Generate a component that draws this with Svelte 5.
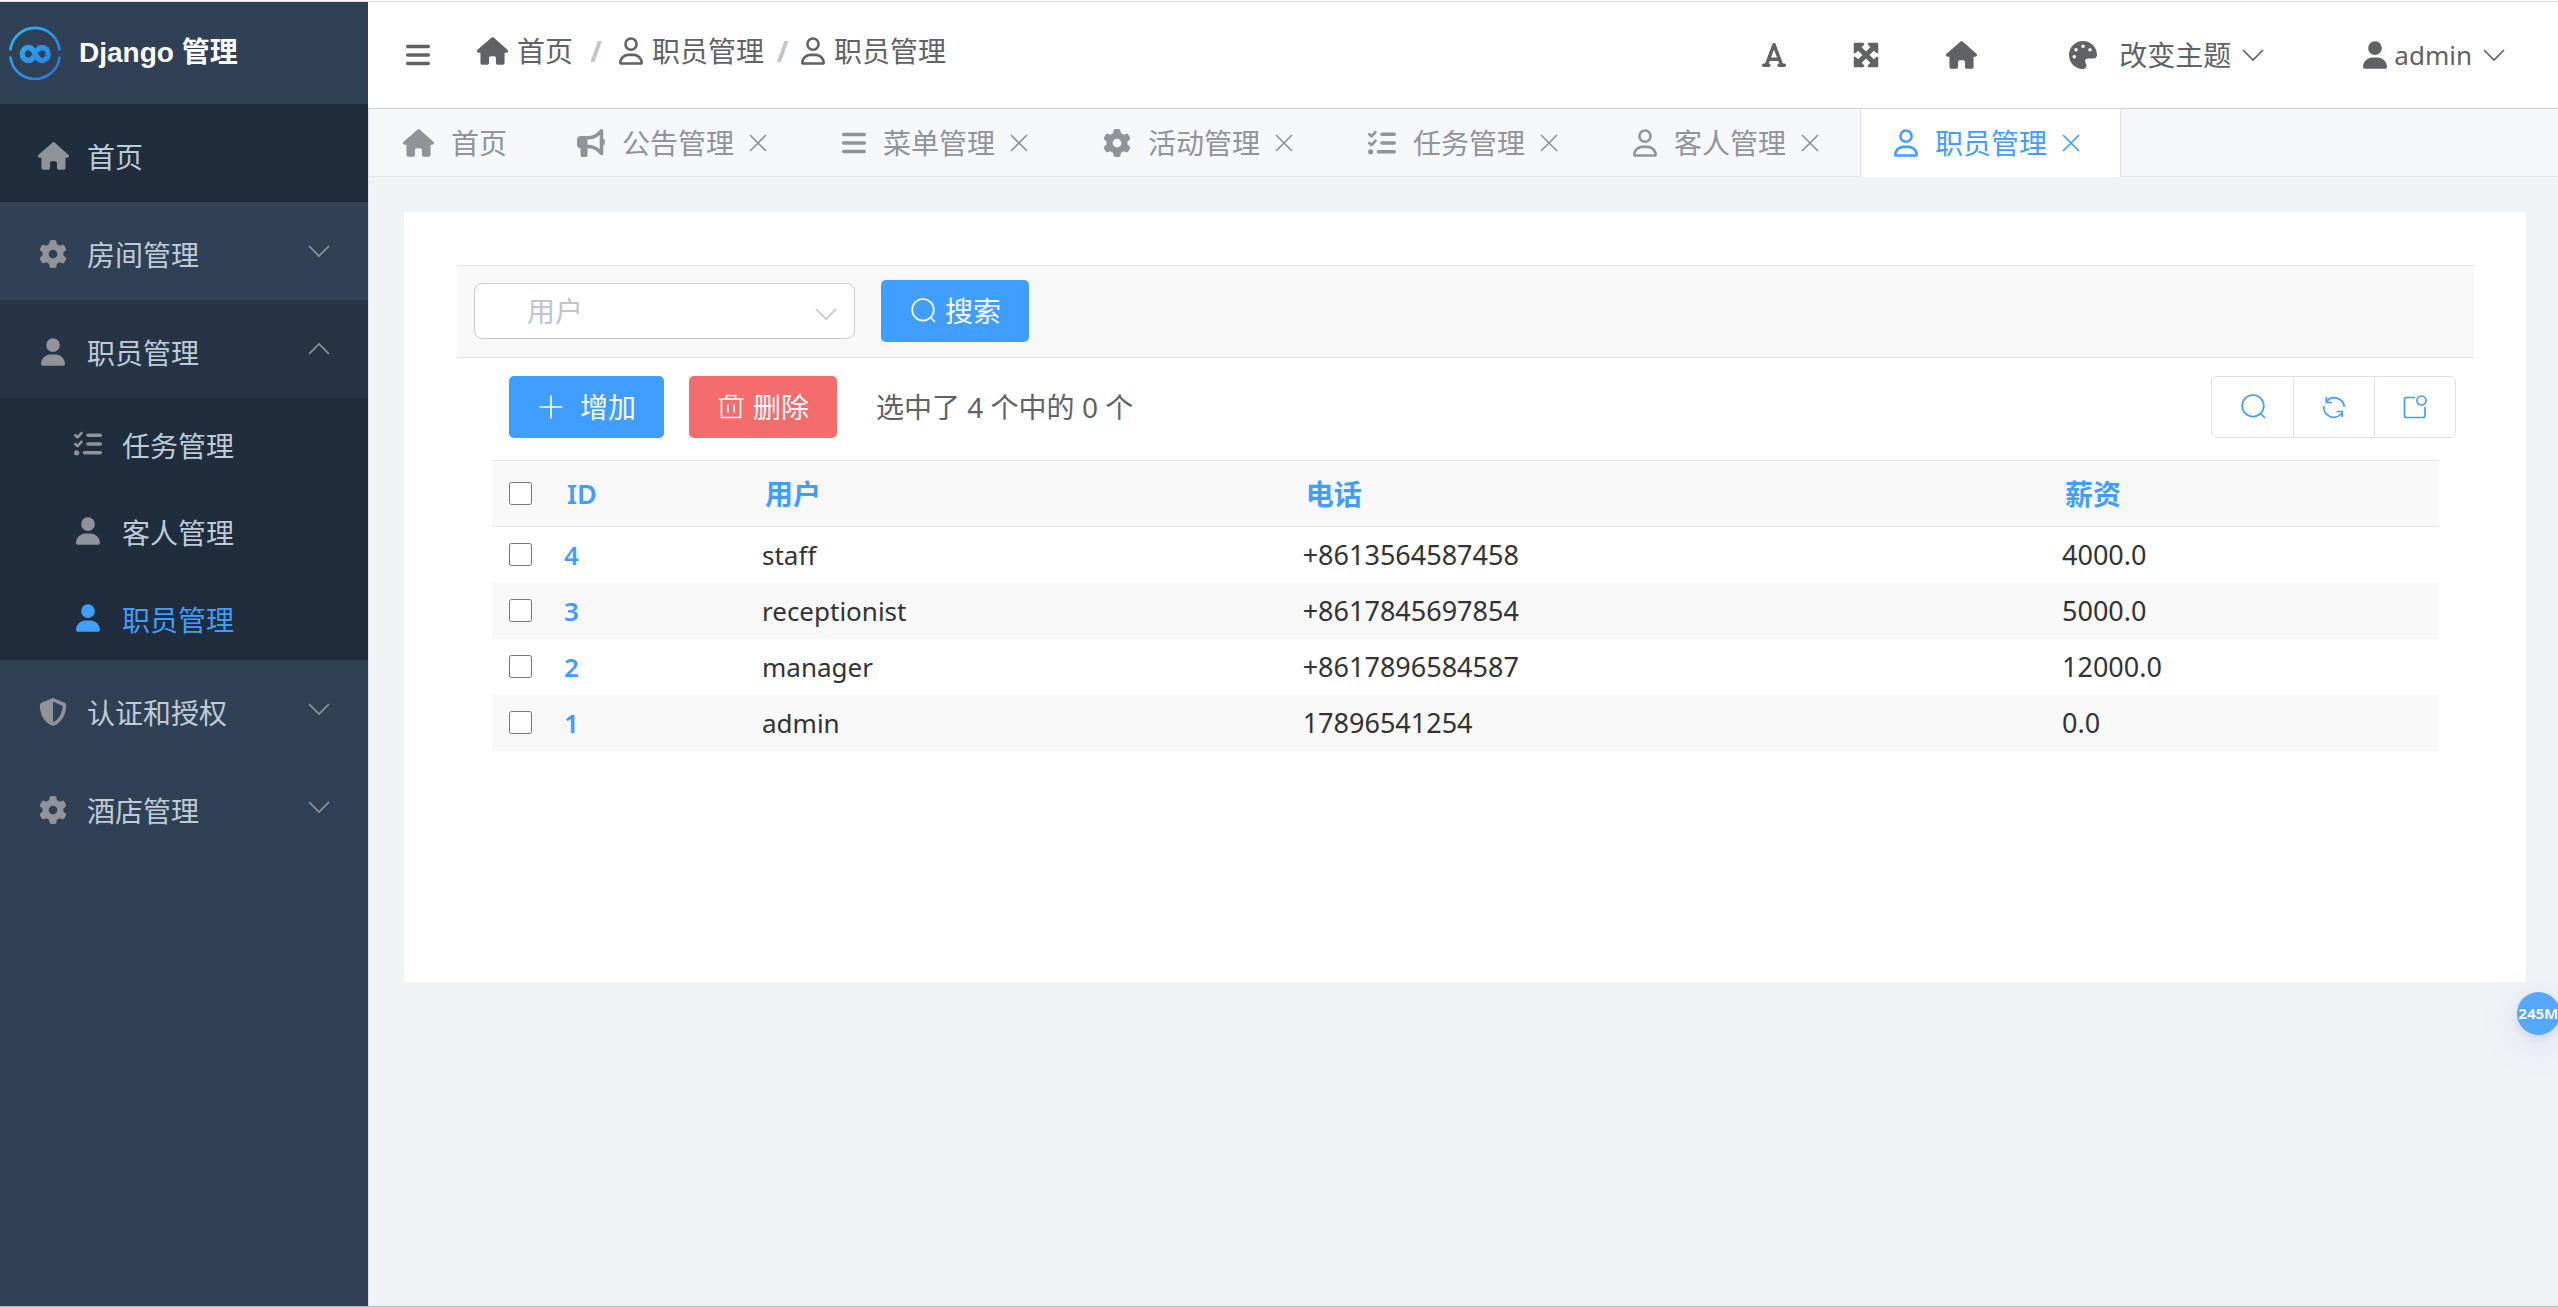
<script>
  const icons = {
    house: {
      w: 576,
      d: "M575.8 255.5c0 18-15 32.1-32 32.1h-32l.7 160.2c0 2.7-.2 5.4-.5 8.1V472c0 22.1-17.9 40-40 40H456c-1.1 0-2.2 0-3.3-.1c-1.4 .1-2.8 .1-4.2 .1H416 392c-22.1 0-40-17.9-40-40V448 384c0-17.7-14.3-32-32-32H256c-17.7 0-32 14.3-32 32v64 24c0 22.1-17.9 40-40 40H160 128.1c-1.5 0-3-.1-4.5-.2c-1.2 .1-2.4 .2-3.6 .2H104c-22.1 0-40-17.9-40-40V360c0-.9 0-1.9 .1-2.8V287.6H32c-18 0-32-14-32-32.1c0-9 3-17 10-24L266.4 8c7-7 15-8 22-8s15 2 21 7L564.8 231.5c8 7 12 15 11 24z",
    },
    bars: {
      w: 448,
      d: "M0 96C0 78.3 14.3 64 32 64H416c17.7 0 32 14.3 32 32s-14.3 32-32 32H32C14.3 128 0 113.7 0 96zM0 256c0-17.7 14.3-32 32-32H416c17.7 0 32 14.3 32 32s-14.3 32-32 32H32c-17.7 0-32-14.3-32-32zM448 416c0 17.7-14.3 32-32 32H32c-17.7 0-32-14.3-32-32s14.3-32 32-32H416c17.7 0 32 14.3 32 32z",
    },
    user: {
      w: 448,
      d: "M224 256A128 128 0 1 0 224 0a128 128 0 1 0 0 256zm-45.7 48C79.8 304 0 383.8 0 482.3C0 498.7 13.3 512 29.7 512H418.3c16.4 0 29.7-13.3 29.7-29.7C448 383.8 368.2 304 269.7 304H178.3z",
    },
    userLine: {
      w: 448,
      d: "M304 128a80 80 0 1 0 -160 0 80 80 0 1 0 160 0zM96 128a128 128 0 1 1 256 0A128 128 0 1 1 96 128zM49.3 464H398.7c-8.9-63.3-63.3-112-129-112H178.3c-65.7 0-120.1 48.7-129 112zM0 482.3C0 383.8 79.8 304 178.3 304h91.4C368.2 304 448 383.8 448 482.3c0 16.4-13.3 29.7-29.7 29.7H29.7C13.3 512 0 498.7 0 482.3z",
    },
    gear: {
      w: 512,
      d: "M495.9 166.6c3.2 8.7 .5 18.4-6.4 24.6l-43.3 39.4c1.1 8.3 1.7 16.8 1.7 25.4s-.6 17.1-1.7 25.4l43.3 39.4c6.9 6.2 9.6 15.9 6.4 24.6c-4.4 11.9-9.7 23.3-15.8 34.3l-4.7 8.1c-6.6 11-14 21.4-22.1 31.2c-5.9 7.2-15.7 9.6-24.5 6.8l-55.7-17.7c-13.4 10.3-28.2 18.9-44 25.4l-12.5 57.1c-2 9.1-9 16.3-18.2 17.8c-13.8 2.3-28 3.5-42.5 3.5s-28.7-1.2-42.5-3.5c-9.2-1.5-16.2-8.7-18.2-17.8l-12.5-57.1c-15.8-6.5-30.6-15.1-44-25.4L83.1 425.9c-8.8 2.8-18.6 .3-24.5-6.8c-8.1-9.8-15.5-20.2-22.1-31.2l-4.7-8.1c-6.1-11-11.4-22.4-15.8-34.3c-3.2-8.7-.5-18.4 6.4-24.6l43.3-39.4C64.6 273.1 64 264.6 64 256s.6-17.1 1.7-25.4L22.4 191.2c-6.9-6.2-9.6-15.9-6.4-24.6c4.4-11.9 9.7-23.3 15.8-34.3l4.7-8.1c6.6-11 14-21.4 22.1-31.2c5.9-7.2 15.7-9.6 24.5-6.8l55.7 17.7c13.4-10.3 28.2-18.9 44-25.4l12.5-57.1c2-9.1 9-16.3 18.2-17.8C227.3 1.2 241.5 0 256 0s28.7 1.2 42.5 3.5c9.2 1.5 16.2 8.7 18.2 17.8l12.5 57.1c15.8 6.5 30.6 15.1 44 25.4l55.7-17.7c8.8-2.8 18.6-.3 24.5 6.8c8.1 9.8 15.5 20.2 22.1 31.2l4.7 8.1c6.1 11 11.4 22.4 15.8 34.3zM256 336a80 80 0 1 0 0-160 80 80 0 1 0 0 160z",
    },
    tasks: {
      w: 512,
      d: "M152.1 38.2c9.9 8.9 10.7 24 1.8 33.9l-72 80c-4.4 4.9-10.6 7.8-17.2 7.9s-12.9-2.4-17.6-7L7 113C-2.3 103.6-2.3 88.4 7 79s24.6-9.4 33.9 0l22.1 22.1 55.1-61.2c8.9-9.9 24-10.7 33.9-1.8zm0 160c9.9 8.9 10.7 24 1.8 33.9l-72 80c-4.4 4.9-10.6 7.8-17.2 7.9s-12.9-2.4-17.6-7L7 273c-9.4-9.4-9.4-24.6 0-33.9s24.6-9.4 33.9 0l22.1 22.1 55.1-61.2c8.9-9.9 24-10.7 33.9-1.8zM224 96c0-17.7 14.3-32 32-32H480c17.7 0 32 14.3 32 32s-14.3 32-32 32H256c-17.7 0-32-14.3-32-32zm0 160c0-17.7 14.3-32 32-32H480c17.7 0 32 14.3 32 32s-14.3 32-32 32H256c-17.7 0-32-14.3-32-32zM160 416c0-17.7 14.3-32 32-32H480c17.7 0 32 14.3 32 32s-14.3 32-32 32H192c-17.7 0-32-14.3-32-32zM48 368a48 48 0 1 1 0 96 48 48 0 1 1 0-96z",
    },
    shield: {
      w: 512,
      d: "M256 0c4.6 0 9.2 1 13.4 2.9L457.7 82.8c22 9.3 38.4 31 38.3 57.2c-.5 99.2-41.3 280.7-213.6 363.2c-16.7 8-36.1 8-52.8 0C57.3 420.7 16.5 239.2 16 140c-.1-26.2 16.3-47.9 38.3-57.2L242.7 2.9C246.8 1 251.4 0 256 0zm0 66.8V444.8C394 378 431.1 230.1 432 141.4L256 66.8l0 0z",
    },
    bullhorn: {
      w: 512,
      d: "M480 32c0-12.9-7.8-24.6-19.8-29.6s-25.7-2.2-34.9 6.9L381.7 53c-48 48-113.1 75-181 75H192 160 64c-35.3 0-64 28.7-64 64v96c0 35.3 28.7 64 64 64l0 128c0 17.7 14.3 32 32 32h64c17.7 0 32-14.3 32-32V352l8.7 0c67.9 0 133 27 181 75l43.6 43.6c9.2 9.2 22.9 11.9 34.9 6.9s19.8-16.6 19.8-29.6V300.4c18.6-8.8 32-32.5 32-60.4s-13.4-51.6-32-60.4V32zm-64 76.7V240 371.3C357.2 317.8 280.5 288 200.7 288H192V192h8.7c79.8 0 156.5-29.8 215.3-83.3z",
    },
    font: {
      w: 448,
      d: "M254 52.8C249.3 40.3 237.3 32 224 32s-25.3 8.3-30 20.8L57.8 416H32c-17.7 0-32 14.3-32 32s14.3 32 32 32h96c17.7 0 32-14.3 32-32s-14.3-32-32-32h-1.8l18-48H303.8l18 48H320c-17.7 0-32 14.3-32 32s14.3 32 32 32h96c17.7 0 32-14.3 32-32s-14.3-32-32-32H390.2L254 52.8zM279.8 304H168.2L224 155.1 279.8 304z",
    },
    maximize: {
      w: 512,
      d: "M200 32H56C42.7 32 32 42.7 32 56V200c0 9.7 5.8 18.5 14.8 22.2s19.3 1.7 26.2-5.2l40-40 79 79-79 79L73 295c-6.9-6.9-17.2-8.9-26.2-5.2S32 302.3 32 312V456c0 13.3 10.7 24 24 24H200c9.7 0 18.5-5.8 22.2-14.8s1.7-19.3-5.2-26.2l-40-40 79-79 79 79-40 40c-6.9 6.9-8.9 17.2-5.2 26.2s12.5 14.8 22.2 14.8H456c13.3 0 24-10.7 24-24V312c0-9.7-5.8-18.5-14.8-22.2s-19.3-1.7-26.2 5.2l-40 40-79-79 79-79 40 40c6.9 6.9 17.2 8.9 26.2 5.2s14.8-12.5 14.8-22.2V56c0-13.3-10.7-24-24-24H312c-9.7 0-18.5 5.8-22.2 14.8s-1.7 19.3 5.2 26.2l40 40-79 79-79-79 40-40c6.9-6.9 8.9-17.2 5.2-26.2S209.7 32 200 32z",
    },
    palette: {
      w: 512,
      d: "M512 256c0 .9 0 1.8 0 2.7c-.4 36.5-33.6 61.3-70.1 61.3H344c-26.5 0-48 21.5-48 48c0 3.4 .4 6.7 1 9.9c2.1 10.2 6.5 20 10.8 29.9c6.1 13.8 12.1 27.5 12.1 42c0 31.8-21.6 60.7-53.4 62c-3.5 .1-7 .2-10.6 .2C114.6 512 0 397.4 0 256S114.6 0 256 0S512 114.6 512 256zM128 288a32 32 0 1 0 -64 0 32 32 0 1 0 64 0zm0-96a32 32 0 1 0 0-64 32 32 0 1 0 0 64zM288 96a32 32 0 1 0 -64 0 32 32 0 1 0 64 0zm96 96a32 32 0 1 0 0-64 32 32 0 1 0 0 64z",
    },
  };

  // thin outline icons, drawn on a 28x28 grid
  const lines = {
    down: "M4 9L14 19L24 9",
    up: "M4 19L14 9L24 19",
    close: "M6 6L22 22M22 6L6 22",
    search: "M14 2A10.8 10.8 0 1 1 14 23.6A10.8 10.8 0 1 1 14 2M21.5 20.5L26 25",
    plus: "M14 2.5V25.5M2.5 14H25.5",
    trash: "M1.5 6H26.5M9.5 6V2.5H18.5V6M4.5 6V24.5H23.5V6M11 11.5V19.5M17 11.5V19.5",
    refresh: "M7 8A10 10 0 0 1 24.3 14M6.3 4V9.5H12M3.8 13A10 10 0 0 0 21.5 20.5M16.5 18.5H22.2V24",
    detail: "M14 4.5H5.5A2 2 0 0 0 3.5 6.5V22.5A2 2 0 0 0 5.5 24.5H22A2 2 0 0 0 24 22.5V14M20.5 3A4.5 4.5 0 1 1 20.5 12A4.5 4.5 0 1 1 20.5 3",
  };

  const menu = [
    { label: "首页", icon: "house", active: true },
    { label: "房间管理", icon: "gear", children: [] },
    {
      label: "职员管理",
      icon: "user",
      children: [
        { label: "任务管理", icon: "tasks" },
        { label: "客人管理", icon: "user" },
        { label: "职员管理", icon: "user" },
      ],
    },
    { label: "认证和授权", icon: "shield", children: [] },
    { label: "酒店管理", icon: "gear", children: [] },
  ];

  const tabs = [
    { label: "首页", icon: "house" },
    { label: "公告管理", icon: "bullhorn" },
    { label: "菜单管理", icon: "bars" },
    { label: "活动管理", icon: "gear" },
    { label: "任务管理", icon: "tasks" },
    { label: "客人管理", icon: "userLine" },
    { label: "职员管理", icon: "userLine" },
  ];

  const rows = [
    { id: 4, user: "staff", phone: "+8613564587458", salary: "4000.0" },
    { id: 3, user: "receptionist", phone: "+8617845697854", salary: "5000.0" },
    { id: 2, user: "manager", phone: "+8617896584587", salary: "12000.0" },
    { id: 1, user: "admin", phone: "17896541254", salary: "0.0" },
  ];

  let opened = $state("职员管理");
  let activeTab = $state(6);
  let selected = $state([]);

  const allSelected = $derived(selected.length === rows.length);

  function toggleMenu(item) {
    if (!item.children) return;
    opened = opened === item.label ? "" : item.label;
  }

  function toggleAll() {
    selected = allSelected ? [] : rows.map((r) => r.id);
  }
</script>

{#snippet icon(name)}
  <svg class="icon" viewBox="0 0 {icons[name].w} 512" width={Math.floor((icons[name].w / 512) * 28)} height="28" aria-hidden="true">
    <path d={icons[name].d} />
  </svg>
{/snippet}

{#snippet line(name)}
  <svg class="line" viewBox="0 0 28 28" width="28" height="28" aria-hidden="true">
    <path d={lines[name]} />
  </svg>
{/snippet}

<div class="app">
  <aside class="sidebar">
    <div class="logo">
      <svg viewBox="0 0 54 54" width="54" height="54" aria-hidden="true">
        <defs>
          <linearGradient id="logo-fill" x1="0" y1="0" x2="54" y2="54" gradientUnits="userSpaceOnUse">
            <stop offset="0" stop-color="#2bc0f5" />
            <stop offset="1" stop-color="#2a6fe0" />
          </linearGradient>
        </defs>
        <g fill="none" stroke="url(#logo-fill)">
          <path stroke-width="2.6" d="M2.3 24.5A24.8 24.8 0 0 1 51.7 24.5M2.3 30.5A24.8 24.8 0 0 0 51.7 30.5" />
          <path
            stroke-width="5.4"
            stroke-linecap="round"
            d="M25 31.5C24 33.5 22.5 34.5 20.8 34.5A6.5 6.5 0 0 1 20.8 21.5C24 21.5 25.5 24.5 27.3 28C29 31.5 30.8 34.5 33.8 34.5A6.5 6.5 0 0 0 33.8 21.5C32.3 21.5 31 22.2 30 23.5"
          />
        </g>
      </svg>
      <strong>Django 管理</strong>
    </div>

    <nav>
      {#each menu as item (item.label)}
        {@const isOpen = opened === item.label}
        <button class="menu-item" class:active={item.active} class:open={isOpen} onclick={() => toggleMenu(item)}>
          <span class="menu-icon">{@render icon(item.icon)}</span>
          <span class="menu-text">{item.label}</span>
          {#if item.children}
            {@render line(isOpen ? "up" : "down")}
          {/if}
        </button>
        {#if isOpen && item.children.length}
          <div class="submenu">
            {#each item.children as child, i (child.label)}
              <a class="submenu-item" class:current={i === 2} href="#{child.label}">
                <span class="menu-icon">{@render icon(child.icon)}</span>
                <span class="menu-text">{child.label}</span>
              </a>
            {/each}
          </div>
        {/if}
      {/each}
    </nav>
  </aside>

  <div class="main">
    <header class="topbar">
      <button class="plain" aria-label="折叠菜单">{@render icon("bars")}</button>
      <div class="crumbs">
        <span class="crumb">{@render icon("house")}首页</span>
        <span class="slash wide">/</span>
        <span class="crumb">{@render icon("userLine")}职员管理</span>
        <span class="slash">/</span>
        <span class="crumb">{@render icon("userLine")}职员管理</span>
      </div>
      <div class="tools">
        <button class="plain" aria-label="字体">{@render icon("font")}</button>
        <button class="plain" aria-label="全屏">{@render icon("maximize")}</button>
        <button class="plain" aria-label="主页">{@render icon("house")}</button>
        <button class="plain theme">
          {@render icon("palette")}
          <span>改变主题</span>
          {@render line("down")}
        </button>
        <button class="plain account">
          {@render icon("user")}
          <span>admin</span>
          {@render line("down")}
        </button>
      </div>
    </header>

    <div class="tabs" role="tablist">
      {#each tabs as tab, i (tab.label)}
        <div class="tab" class:on={activeTab === i}>
          <button class="plain tab-label" role="tab" aria-selected={activeTab === i} onclick={() => (activeTab = i)}>
            {@render icon(tab.icon)}
            <span>{tab.label}</span>
          </button>
          {#if i > 0}
            <button class="plain tab-close" aria-label="关闭{tab.label}">{@render line("close")}</button>
          {/if}
        </div>
      {/each}
    </div>

    <main class="content">
      <section class="card">
        <form class="search" onsubmit={(e) => e.preventDefault()}>
          <div class="select">
            <select aria-label="用户">
              <option value="">用户</option>
            </select>
            {@render line("down")}
          </div>
          <button class="btn primary">{@render line("search")}搜索</button>
        </form>

        <div class="actions">
          <button class="btn primary add">{@render line("plus")}增加</button>
          <button class="btn danger">{@render line("trash")}删除</button>
          <span class="counter">选中了 {rows.length} 个中的 {selected.length} 个</span>
          <div class="group">
            <button aria-label="搜索栏">{@render line("search")}</button>
            <button aria-label="刷新">{@render line("refresh")}</button>
            <button aria-label="新窗口打开">{@render line("detail")}</button>
          </div>
        </div>

        <table>
          <thead>
            <tr>
              <th class="col-check">
                <input type="checkbox" aria-label="全选" checked={allSelected} onchange={toggleAll} />
              </th>
              <th class="col-id"><a href="#id">ID</a></th>
              <th><a href="#user">用户</a></th>
              <th class="col-phone"><a href="#phone">电话</a></th>
              <th class="col-salary"><a href="#salary">薪资</a></th>
            </tr>
          </thead>
          <tbody>
            {#each rows as row (row.id)}
              <tr>
                <td class="col-check">
                  <input type="checkbox" aria-label="选择 {row.user}" value={row.id} bind:group={selected} />
                </td>
                <td class="id"><a href="#{row.id}">{row.id}</a></td>
                <td>{row.user}</td>
                <td class="num">{row.phone}</td>
                <td class="num">{row.salary}</td>
              </tr>
            {/each}
          </tbody>
        </table>
      </section>
    </main>
  </div>

  <div class="memory">245M</div>
</div>

<style>
  :global(body) {
    background: #fff;
  }

  .app,
  .app * {
    box-sizing: border-box;
  }

  .app {
    --blue: #409eff;
    display: flex;
    min-height: 100vh;
    padding-top: 1px;
    border-top: 1px solid #fff;
    border-bottom: 1px solid #b4b9c4;
    background: #dcdfe6;
    overflow: hidden;
    color: #606266;
    font-family: "Noto Sans", "Noto Sans CJK SC", sans-serif;
    font-size: 28px;
    line-height: 40px;
  }

  button,
  select {
    font: inherit;
    color: inherit;
  }

  button {
    cursor: pointer;
  }

  a {
    color: inherit;
    text-decoration: none;
  }

  .icon {
    display: block;
    flex: none;
    fill: currentColor;
  }

  .line {
    display: block;
    flex: none;
    fill: none;
    stroke: currentColor;
    stroke-width: 1.7;
  }

  .plain {
    display: flex;
    align-items: center;
    padding: 0;
    border: 0;
    background: none;
  }

  /* sidebar */
  .sidebar {
    flex: none;
    width: 368px;
    background: #304156;
    color: #bfcbd9;
  }

  .logo {
    display: flex;
    align-items: center;
    gap: 17px;
    height: 102px;
    padding-left: 8px;
    color: #fff;
    font-family: "Liberation Sans", "Noto Sans CJK SC", sans-serif;
  }

  .menu-item {
    display: flex;
    align-items: center;
    width: 100%;
    height: 98px;
    padding: 0 35px 0 37px;
    border: 0;
    background: none;
    text-align: left;
  }

  .menu-item.active {
    background: #1f2d3d;
  }

  .menu-item.open {
    background: #263445;
  }

  .menu-item :global(.line) {
    color: #909399;
  }

  .menu-icon {
    display: flex;
    justify-content: center;
    width: 32px;
    margin-right: 18px;
    padding-top: 5px;
    color: #909399;
  }

  .menu-text {
    flex: 1;
    padding-top: 8px;
  }

  .submenu {
    padding-bottom: 1px;
    background: #1f2d3d;
  }

  .submenu-item {
    display: flex;
    align-items: center;
    height: 87px;
    padding-left: 72px;
  }

  .submenu-item.current,
  .current .menu-icon {
    color: var(--blue);
  }

  /* right side */
  .main {
    display: flex;
    flex: 1;
    flex-direction: column;
    min-width: 0;
  }

  .topbar {
    display: flex;
    align-items: center;
    height: 107px;
    padding: 0 50px 0 38px;
    border-bottom: 1px solid #d0d3d9;
    background: #fff;
  }

  .crumbs {
    display: flex;
    align-items: center;
    margin-left: 47px;
    padding-bottom: 8px;
  }

  .crumb {
    display: flex;
    align-items: center;
    gap: 9px;
  }

  .slash {
    width: 37px;
    color: #c0c4cc;
    font-weight: 700;
    text-align: center;
  }

  .slash.wide {
    width: 46px;
  }

  .tools {
    display: flex;
    align-items: center;
    margin-left: auto;
  }

  .tools .plain {
    margin-right: 66px;
  }

  .tools .plain:nth-child(3) {
    margin-right: 92px;
  }

  .theme span {
    margin: 0 8px 0 22px;
  }

  .tools .theme {
    margin-right: 96px;
  }

  .account span {
    margin: 0 8px 0 7px;
    font-size: 26px;
  }

  .tools .account {
    margin-right: 0;
  }

  .tabs {
    display: flex;
    height: 68px;
    border-bottom: 1px solid #e4e7ed;
    border-left: 1px solid #dcdfe6;
    background: #f5f7fa;
    color: #909399;
  }

  .tab {
    display: flex;
    align-items: center;
    height: 68px;
    padding: 0 35px 0 33px;
    border: solid transparent;
    border-width: 0 1px;
  }

  .tab.on {
    border-color: #dcdfe6;
    background: #fff;
    color: var(--blue);
  }

  .tab-label {
    gap: 17px;
  }

  .tab-close {
    margin-left: 10px;
  }

  .content {
    flex: 1;
    padding: 35px 32px 35px 35px;
    border-left: 1px solid #dcdfe6;
    background: #eff3f6;
  }

  .card {
    padding: 53px 52px 231px 53px;
    background: #fff;
  }

  .search {
    display: flex;
    align-items: center;
    gap: 26px;
    height: 93px;
    padding: 0 17px 2px;
    border: solid #e6e6e6;
    border-width: 1px 0;
    background: #f8f8f8;
  }

  .select {
    position: relative;
    width: 381px;
    color: #c0c4cc;
  }

  .select select {
    display: block;
    width: 100%;
    height: 56px;
    padding: 0 52px;
    border: 1px solid #ccc;
    border-radius: 8px;
    background: #fff;
    appearance: none;
  }

  .select :global(.line) {
    position: absolute;
    top: 17px;
    right: 15px;
    pointer-events: none;
  }

  .btn {
    display: flex;
    align-items: center;
    gap: 8px;
    height: 62px;
    padding: 0 28px;
    border: 0;
    border-radius: 5px;
    color: #fff;
  }

  .btn.add {
    gap: 15px;
  }

  .primary {
    background: var(--blue);
  }

  .danger {
    background: #f56c6c;
  }

  .actions {
    display: flex;
    align-items: center;
    gap: 25px;
    padding: 18px 18px 22px 52px;
  }

  .counter {
    padding-left: 14px;
  }

  .group {
    display: flex;
    margin-left: auto;
    border: 1px solid #dcdfe6;
    border-radius: 6px;
  }

  .group button {
    display: flex;
    align-items: center;
    justify-content: center;
    width: 81px;
    height: 60px;
    padding: 0;
    border: 0;
    background: none;
    color: var(--blue);
  }

  .group button + button {
    border-left: 1px solid #dcdfe6;
  }

  table {
    width: calc(100% - 70px);
    margin-left: 35px;
    border-collapse: collapse;
    table-layout: fixed;
    color: #333;
    font-size: 26px;
  }

  th {
    height: 66px;
    padding: 0 0 0 19px;
    border: solid #e6e6e6;
    border-width: 1px 0;
    background: #f8f8f8;
    color: var(--blue);
    font-size: 28px;
    font-weight: 700;
    text-align: left;
  }

  th a {
    display: block;
  }

  td {
    height: 56px;
    padding: 0 0 0 16px;
  }

  tbody tr:nth-child(even) {
    background: #f8f8f8;
  }

  .col-check {
    width: 56px;
    padding-left: 17px;
  }

  .col-id {
    width: 198px;
    font-size: 27px;
    font-weight: 600;
  }

  .col-phone {
    width: 39%;
  }

  .col-salary {
    width: 393px;
  }

  .id {
    color: var(--blue);
    font-weight: 600;
  }

  .num {
    font-size: 27px;
  }

  input[type="checkbox"] {
    display: block;
    width: 23px;
    height: 23px;
    margin: 0;
  }

  /* floating memory gauge at the window edge */
  .memory {
    position: fixed;
    top: 992px;
    right: -2px;
    width: 43px;
    height: 43px;
    border-radius: 50%;
    background: #55a7ff;
    box-shadow: 0 8px 40px rgb(100 110 230 / 16%), 0 4px 8px rgb(60 80 160 / 12%);
    color: #fff;
    font-size: 15px;
    font-weight: 700;
    line-height: 43px;
    text-align: center;
  }
</style>
